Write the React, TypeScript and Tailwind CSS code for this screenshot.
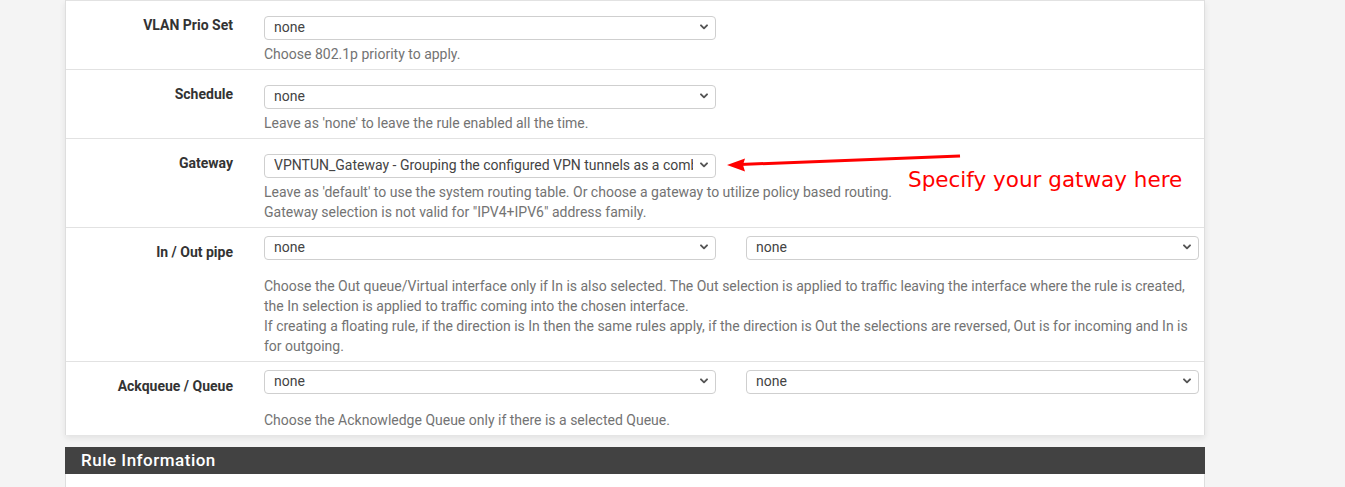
import React from 'react';

// --- Select control (pfSense / bootstrap look) ---
function Select({ value, width }: { value: string; width: string }) {
  return (
    <div className={`relative h-[24px] ${width}`}>
      <select
        defaultValue={value}
        className="h-full w-full appearance-none rounded-[4px] border border-[#cfcfcf] bg-white pl-[9px] pr-[22px] text-[14px] text-[#444] outline-none"
      >
        <option value={value}>{value}</option>
      </select>
      <svg
        className="pointer-events-none absolute right-[8px] top-[9px]"
        width="8"
        height="6"
        viewBox="0 0 8 6"
        fill="none"
      >
        <path d="M1 1.3 L4 4.3 L7 1.3" stroke="#555" strokeWidth="1.9" strokeLinecap="round" strokeLinejoin="round" />
      </svg>
    </div>
  );
}

function Row({
  label,
  children,
  help,
  tight,
}: {
  label: string;
  children: React.ReactNode;
  help: React.ReactNode;
  tight?: boolean;
}) {
  return (
    <div className="flex border-t border-[#e2e2e2] pb-[5px]">
      <div className="w-[167px] shrink-0 pt-[14px] text-right text-[14px] font-bold leading-5 text-[#333]">
        {label}
      </div>
      <div className={`ml-[31px] w-[935px] ${tight ? 'pt-[7px]' : 'pt-[14px]'}`}>
        <div className="flex gap-[30px]">{children}</div>
        <div className={`${tight ? 'mt-[17px]' : 'mt-[5px]'} text-[14px] leading-5 text-[#737373]`}>{help}</div>
      </div>
    </div>
  );
}

export default function App() {
  return (
    <div
      className="relative h-[487px] w-[1345px] overflow-hidden bg-[#f4f4f4]"
      style={{ fontFamily: 'Roboto, "Liberation Sans", sans-serif' }}
    >
      <div className="ml-[65px] w-[1140px] border-x border-[#dedede] bg-white shadow-[0_3px_6px_rgba(0,0,0,0.08)]">
        <Row label="VLAN Prio Set" help="Choose 802.1p priority to apply.">
          <Select value="none" width="w-[452px]" />
        </Row>
        <Row label="Schedule" help="Leave as 'none' to leave the rule enabled all the time.">
          <Select value="none" width="w-[452px]" />
        </Row>
        <Row
          label="Gateway"
          help={
            <>
              Leave as 'default' to use the system routing table. Or choose a gateway to utilize policy based routing.
              <br />
              Gateway selection is not valid for "IPV4+IPV6" address family.
            </>
          }
        >
          <Select value="VPNTUN_Gateway - Grouping the configured VPN tunnels as a combined gateway" width="w-[452px]" />
        </Row>
        <Row
          tight
          label="In / Out pipe"
          help={
            <>
              Choose the Out queue/Virtual interface only if In is also selected. The Out selection is applied to traffic
              leaving the interface where the rule is created, the In selection is applied to traffic coming into the
              chosen interface.
              <br />
              If creating a floating rule, if the direction is In then the same rules apply, if the direction is Out the
              selections are reversed, Out is for incoming and In is for outgoing.
            </>
          }
        >
          <Select value="none" width="w-[452px]" />
          <Select value="none" width="w-[453px]" />
        </Row>
        <Row tight label="Ackqueue / Queue" help="Choose the Acknowledge Queue only if there is a selected Queue.">
          <Select value="none" width="w-[452px]" />
          <Select value="none" width="w-[453px]" />
        </Row>
      </div>

      <div className="ml-[65px] mt-[12px] w-[1140px]">
        <div className="flex h-[27px] items-center bg-[#424242] pl-[16px] text-[17px] font-medium tracking-[0.5px] text-white">
          Rule Information
        </div>
        <div className="h-[40px] border-x border-[#dedede] bg-white" />
      </div>

      {/* annotation */}
      <svg className="pointer-events-none absolute left-0 top-0" width="1345" height="487">
        <line x1="960" y1="156" x2="740" y2="164.5" stroke="#ff0000" strokeWidth="3" />
        <polygon points="727,165 745,158.5 743,165 745,171.5" fill="#ff0000" />
      </svg>
      <div
        className="absolute left-[908px] top-[169px] whitespace-nowrap text-[21.5px] leading-none text-[#ff0000]"
        style={{ fontFamily: '"DejaVu Sans", sans-serif' }}
      >
        Specify your gatway here
      </div>
    </div>
  );
}
